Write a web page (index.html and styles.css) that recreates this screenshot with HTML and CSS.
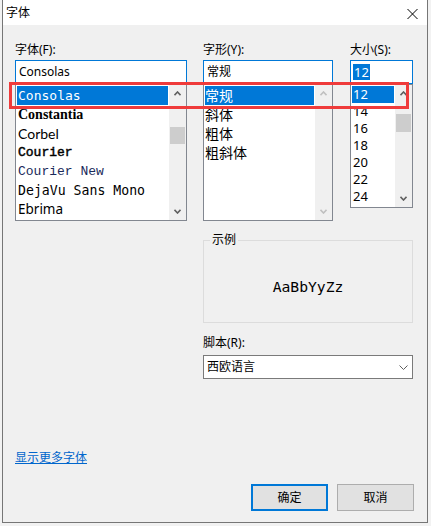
FILE: index.html
```html
<!DOCTYPE html>
<html lang="zh-CN">
<head>
<meta charset="utf-8">
<title>字体</title>
<link rel="stylesheet" href="styles.css">
</head>
<body>
<div class="window">
  <div class="titlebar">
    <span class="title">字体</span>
    <svg class="close" viewBox="0 0 11 10" width="11" height="10"><path d="M0.5 0 L10.5 10 M10.5 0 L0.5 10" stroke="#000" stroke-width="1" fill="none"/></svg>
  </div>
  <div class="content">
    <div class="columns">
      <div class="col col-font">
        <div class="label">字体(F):</div>
        <div class="edit">Consolas</div>
        <div class="list list-font">
          <div class="items">
            <div class="item sel f-consolas">Consolas</div>
            <div class="item f-constantia">Constantia</div>
            <div class="item f-corbel">Corbel</div>
            <div class="item f-courier">Courier</div>
            <div class="item f-couriernew">Courier New</div>
            <div class="item f-dejavu">DejaVu Sans Mono</div>
            <div class="item f-ebrima">Ebrima</div>
          </div>
          <div class="scrollbar">
            <div class="sb-btn"><svg width="7" height="5" viewBox="0 0 7 5"><path d="M0.5 4.2 L3.5 1 L6.5 4.2" class="arrow"/></svg></div>
            <div class="sb-track"><div class="thumb thumb-font"></div></div>
            <div class="sb-btn"><svg width="7" height="5" viewBox="0 0 7 5"><path d="M0.5 0.8 L3.5 4 L6.5 0.8" class="arrow"/></svg></div>
          </div>
        </div>
      </div>
      <div class="col col-style">
        <div class="label">字形(Y):</div>
        <div class="edit">常规</div>
        <div class="list list-style">
          <div class="items">
            <div class="item sel cjk">常规</div>
            <div class="item cjk">斜体</div>
            <div class="item cjk">粗体</div>
            <div class="item cjk">粗斜体</div>
          </div>
          <div class="scrollbar disabled">
            <div class="sb-btn"><svg width="7" height="5" viewBox="0 0 7 5"><path d="M0.5 4.2 L3.5 1 L6.5 4.2" class="arrow"/></svg></div>
            <div class="sb-track"></div>
            <div class="sb-btn"><svg width="7" height="5" viewBox="0 0 7 5"><path d="M0.5 0.8 L3.5 4 L6.5 0.8" class="arrow"/></svg></div>
          </div>
        </div>
      </div>
      <div class="col col-size">
        <div class="label">大小(S):</div>
        <div class="edit edit-size"><span class="selected-text">12</span></div>
        <div class="list list-size">
          <div class="items">
            <div class="item sel">12</div>
            <div class="item">14</div>
            <div class="item">16</div>
            <div class="item">18</div>
            <div class="item">20</div>
            <div class="item">22</div>
            <div class="item">24</div>
          </div>
          <div class="scrollbar">
            <div class="sb-btn"><svg width="7" height="5" viewBox="0 0 7 5"><path d="M0.5 4.2 L3.5 1 L6.5 4.2" class="arrow"/></svg></div>
            <div class="sb-track"><div class="thumb thumb-size"></div></div>
            <div class="sb-btn"><svg width="7" height="5" viewBox="0 0 7 5"><path d="M0.5 0.8 L3.5 4 L6.5 0.8" class="arrow"/></svg></div>
          </div>
        </div>
      </div>
    </div>
    <div class="lower">
      <div class="group">
        <span class="legend">示例</span>
        <span class="sample">AaBbYyZz</span>
      </div>
      <div class="label script-label">脚本(R):</div>
      <div class="select">
        <span>西欧语言</span>
        <svg width="9" height="5" viewBox="0 0 9 5"><path d="M0.5 0.5 L4.5 4.5 L8.5 0.5" fill="none" stroke="#5f5f5f" stroke-width="1"/></svg>
      </div>
    </div>
    <a class="more" href="#">显示更多字体</a>
    <div class="buttons">
      <div class="btn btn-default">确定</div>
      <div class="btn">取消</div>
    </div>
  </div>
</div>
<div class="mark"></div>
</body>
</html>
```
FILE: styles.css
```css
* { box-sizing: border-box; }
html, body { margin: 0; padding: 0; }
body {
  width: 431px;
  height: 526px;
  overflow: hidden;
  background: #f2f2f2;
  font-family: "Noto Sans", "Noto Sans CJK SC", sans-serif;
  font-size: 12px;
  color: #000;
}
.window {
  margin-left: 2px;
  width: 426px;
  height: 523px;
  background: #f0f0f0;
  border: 1px solid #767676;
  border-top: none;
  display: flex;
  flex-direction: column;
}
.titlebar {
  height: 25px;
  flex: none;
  background: #fff;
  display: flex;
  align-items: center;
  justify-content: space-between;
  padding: 0 9px 0 3px;
}
.title { line-height: 16px; }
.close { margin-top: 3px; }
.content {
  flex: 1;
  display: flex;
  flex-direction: column;
  padding: 0 13px 0 12px;
}
.columns { display: flex; margin-top: 17px; }
.col { display: flex; flex-direction: column; }
.col-font { width: 172px; }
.col-style { width: 130px; margin-left: 16px; }
.col-size { width: 63px; margin-left: 17px; }
.label { height: 16px; line-height: 16px; white-space: nowrap; }
.edit {
  margin-top: 2px;
  height: 24px;
  background: #fff;
  border: 1px solid #0078d7;
  padding-left: 3px;
  line-height: 22px;
  white-space: nowrap;
}
.edit-size { padding-left: 2px; display: flex; align-items: center; }
.selected-text {
  background: #0078d7;
  color: #fff;
  line-height: 16px;
  padding: 0 1px;
  font-size: 13px;
}
.list {
  height: 137px;
  background: #fff;
  border: 1px solid #828790;
  display: flex;
}
.list-size { height: 124px; }
.items { flex: 1; padding: 1px 1px 0; overflow: hidden; }
.item {
  height: 19px;
  line-height: 19px;
  padding-left: 1px;
  white-space: nowrap;
  font-size: 13px;
}
.list-size .item { height: 17px; line-height: 17px; }
.item.sel { background: #0078d7; color: #fff; }
.cjk { font-size: 14px; padding-left: 0; }
.f-consolas { font-family: "DejaVu Sans Mono", monospace; font-size: 13px; }
.f-constantia { font-family: "Liberation Serif", serif; font-weight: bold; font-size: 14px; }
.f-corbel { font-family: "Lato", sans-serif; font-size: 14px; }
.f-courier { font-family: "Liberation Mono", monospace; font-size: 13px; -webkit-text-stroke: 0.45px #000; }
.f-couriernew { font-family: "Liberation Mono", monospace; font-size: 13px; color: #1a2a5a; }
.f-dejavu { font-family: "DejaVu Sans Mono", monospace; font-size: 13.2px; }
.f-ebrima { font-family: "Noto Sans", sans-serif; font-size: 13.5px; }
.scrollbar {
  width: 17px;
  flex: none;
  background: #f0f0f0;
  display: flex;
  flex-direction: column;
}
.sb-btn {
  height: 17px;
  flex: none;
  display: flex;
  align-items: center;
  justify-content: center;
}
.arrow { fill: none; stroke: #606060; stroke-width: 1.6; }
.disabled .arrow { stroke: #c0c0c0; }
.sb-track { flex: 1; }
.thumb { margin: 0 1px; background: #cdcdcd; }
.thumb-font { margin-top: 25px; height: 17px; }
.thumb-size { margin-top: 12px; height: 18px; }
.lower {
  margin-left: 188px;
  width: 210px;
  display: flex;
  flex-direction: column;
}
.group {
  position: relative;
  margin-top: 19px;
  height: 83px;
  border: 1px solid #dcdcdc;
  display: flex;
  justify-content: center;
  padding-top: 37px;
}
.legend {
  position: absolute;
  top: -9px;
  left: 6px;
  padding: 0 2px;
  background: #f0f0f0;
  line-height: 16px;
}
.sample {
  font-family: "DejaVu Sans Mono", monospace;
  font-size: 14.7px;
  line-height: 18px;
}
.script-label { margin-top: 12px; }
.select {
  margin-top: 4px;
  height: 24px;
  background: #fff;
  border: 1px solid #7a7a7a;
  display: flex;
  align-items: center;
  justify-content: space-between;
  padding: 0 4px 0 3px;
  line-height: 16px;
}
.more {
  margin-top: 71px;
  line-height: 16px;
  color: #0066cc;
  text-decoration: underline;
  align-self: flex-start;
}
.buttons {
  margin-top: 18px;
  display: flex;
  justify-content: flex-end;
  gap: 9px;
}
.btn {
  width: 77px;
  height: 27px;
  background: #e1e1e1;
  border: 1px solid #adadad;
  display: flex;
  align-items: center;
  justify-content: center;
  line-height: 16px;
}
.btn-default { border: 2px solid #0078d7; }
.mark {
  position: absolute;
  left: 9px;
  top: 82px;
  width: 400px;
  height: 27px;
  border: 3px solid #ef3b3b;
}
```
